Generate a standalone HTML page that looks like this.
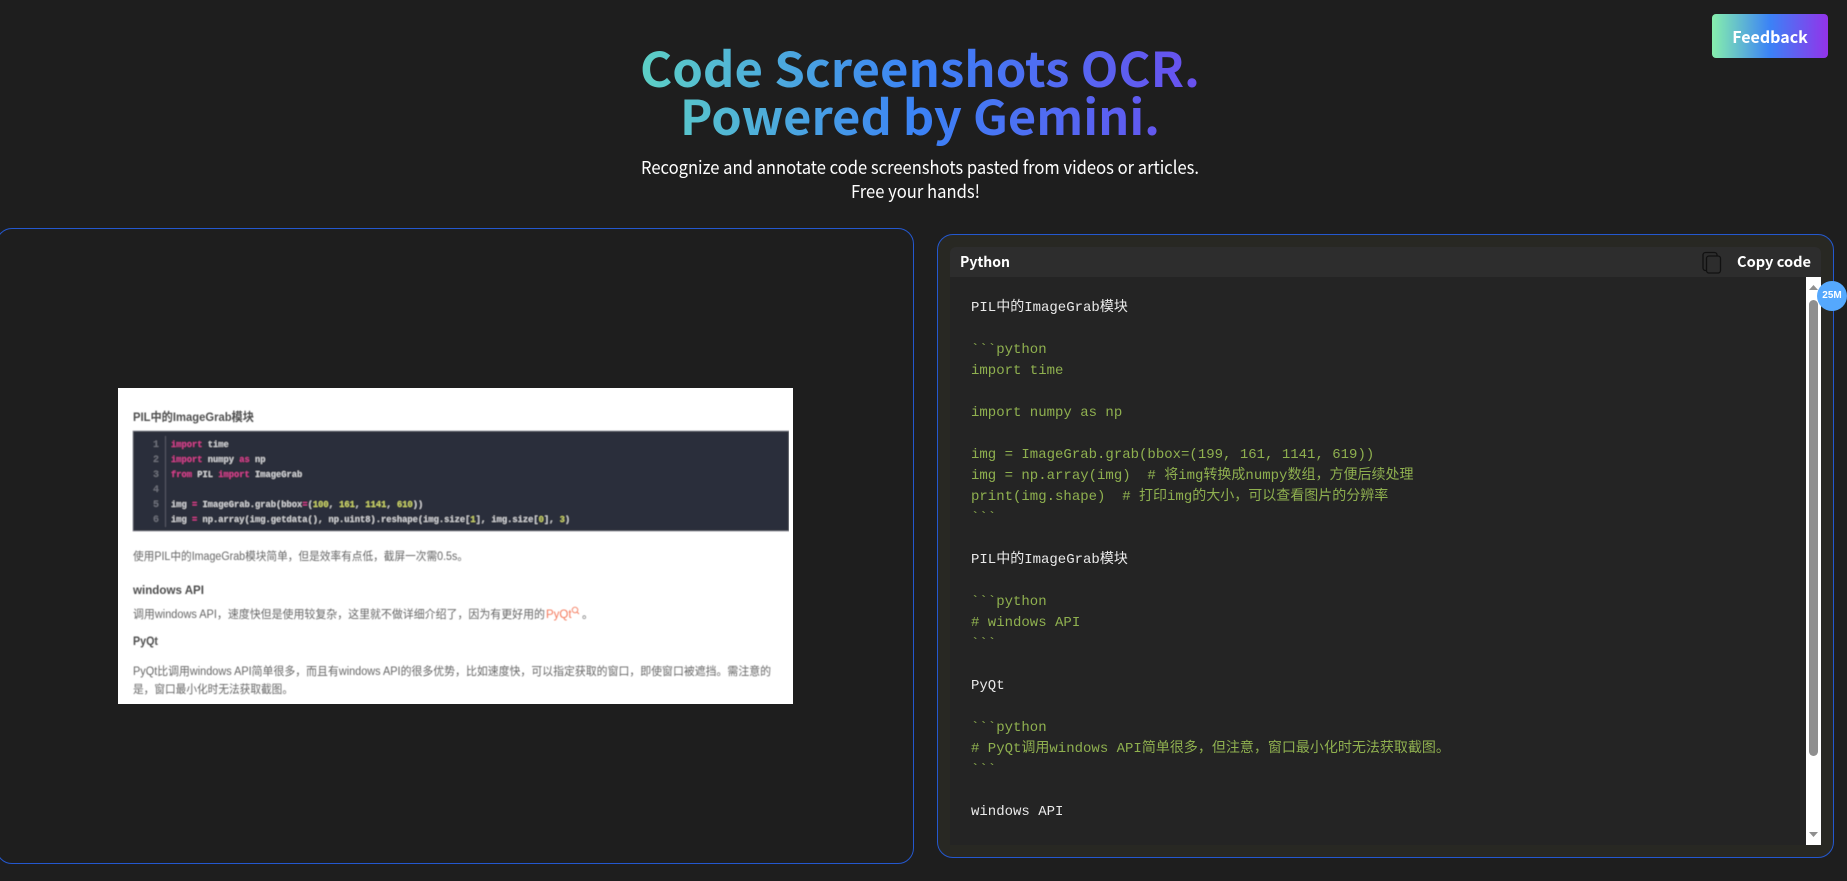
<!DOCTYPE html>
<html lang="en"><head><meta charset="utf-8"><title>Code Screenshots OCR</title>
<style>
html,body{margin:0;padding:0;width:1847px;height:881px;overflow:hidden;background:#1e1e1e}
.abs{position:absolute}
#left{left:-4px;top:228px;width:916px;height:634px;border:1px solid #2458cf;border-radius:16px;box-sizing:content-box}
#right{left:937px;top:234px;width:895px;height:622px;border:1px solid #2458cf;border-radius:16px;background:#282823}
#hdr{left:950px;top:247px;width:871px;height:30px;background:#2d2d2d;border-radius:6px 6px 0 0}
#code{left:950px;top:277px;width:856px;height:568px;background:#242424}
#bar{left:1806px;top:277px;width:15px;height:568px;background:#fff}
#thumb{left:1809px;top:300px;width:9px;height:456px;background:#8f8f8f;border-radius:5px}
#fb{left:1712px;top:14px;width:116px;height:44px;border-radius:4px;background:linear-gradient(90deg,#86efac,#3b82f6 50%,#9333ea);color:#fff;font:700 16px/44px "Noto Sans CJK SC","Liberation Sans",sans-serif;text-align:center}
#badge{left:1817px;top:281px;width:30px;height:30px;border-radius:50%;background:#55a8fd;color:#fff;font:700 10px/30px "Liberation Sans",sans-serif;text-align:center}
pre{margin:0;left:971px;top:298px;font:14px/21px "Liberation Mono","Noto Sans CJK SC",monospace;color:#eaeaea}
pre b{font-weight:400;color:#8fb04f}
svg{position:absolute;left:0;top:0}
</style></head><body>
<div class="abs" id="left"></div>
<div class="abs" id="right"></div>
<div class="abs" id="hdr"></div>
<div class="abs" id="code"></div>
<pre class="abs">PIL中的ImageGrab模块

<b>&#96;&#96;&#96;python
import time

import numpy as np

img = ImageGrab.grab(bbox=(199, 161, 1141, 619))
img = np.array(img)  # 将img转换成numpy数组，方便后续处理
print(img.shape)  # 打印img的大小，可以查看图片的分辨率
&#96;&#96;&#96;</b>

PIL中的ImageGrab模块

<b>&#96;&#96;&#96;python
# windows API
&#96;&#96;&#96;</b>

PyQt

<b>&#96;&#96;&#96;python
# PyQt调用windows API简单很多，但注意，窗口最小化时无法获取截图。
&#96;&#96;&#96;</b>

windows API</pre>
<div class="abs" id="bar"></div>
<div class="abs" id="thumb"></div>
<div class="abs" id="fb">Feedback</div>
<svg width="1847" height="881" viewBox="0 0 1847 881" xmlns="http://www.w3.org/2000/svg">
<defs>
<linearGradient id="g" gradientUnits="userSpaceOnUse" x1="640" y1="0" x2="1200" y2="0">
<stop offset="0" stop-color="#5dd0c5"/><stop offset=".5" stop-color="#3b82f6"/><stop offset="1" stop-color="#6a50ee"/>
</linearGradient>
<filter id="soft" x="0" y="0" width="1" height="1"><feGaussianBlur stdDeviation="0.45"/></filter>
</defs>
<g font-family="'Noto Sans CJK SC','Liberation Sans',sans-serif">
<text x="640" y="87" font-size="48" font-weight="700" fill="url(#g)" textLength="560" lengthAdjust="spacingAndGlyphs">Code Screenshots OCR.</text>
<text x="680" y="135" font-size="48" font-weight="700" fill="url(#g)" textLength="480" lengthAdjust="spacingAndGlyphs">Powered by Gemini.</text>
<text x="641" y="174" font-size="18" fill="#fff" textLength="558" lengthAdjust="spacingAndGlyphs">Recognize and annotate code screenshots pasted from videos or articles.</text>
<text x="851" y="198" font-size="18" fill="#fff" textLength="129" lengthAdjust="spacingAndGlyphs">Free your hands!</text>
<text x="960" y="267" font-size="14.5" font-weight="700" fill="#fff" textLength="50" lengthAdjust="spacingAndGlyphs">Python</text>
<text x="1737" y="267" font-size="14.5" font-weight="700" fill="#fff" textLength="74" lengthAdjust="spacingAndGlyphs">Copy code</text>
</g>
<!-- copy icon -->
<rect x="1703" y="252.5" width="14" height="18" rx="2.5" fill="none" stroke="#111" stroke-width="1.3"/>
<rect x="1706.5" y="256" width="14" height="17" rx="2.5" fill="#2d2d2d" stroke="#111" stroke-width="1.3"/>
<!-- scrollbar arrows -->
<path d="M1813.5 285l4.5 5h-9z" fill="#8f8f8f"/>
<path d="M1813.5 837l4.5-5h-9z" fill="#8f8f8f"/>
<!-- screenshot image -->
<rect x="118" y="388" width="675" height="316" fill="#fff"/>
<g filter="url(#soft)">
<rect x="133" y="431" width="656" height="100" fill="#2b2e3a" stroke="#8a8c94" stroke-width=".7"/>
<rect x="165" y="436" width="1" height="91" fill="#555862"/>
<g font-family="'Liberation Mono',monospace" font-size="8.75" font-weight="700" fill="#d4d5d9" xml:space="preserve">
<g fill="#6d707a" font-size="10" text-anchor="end"><text x="159" y="447">1</text><text x="159" y="462">2</text><text x="159" y="477">3</text><text x="159" y="492">4</text><text x="159" y="507">5</text><text x="159" y="522">6</text></g>
<text x="171" y="447"><tspan fill="#d9418f">import</tspan> time</text>
<text x="171" y="462"><tspan fill="#d9418f">import</tspan> numpy <tspan fill="#d9418f">as</tspan> np</text>
<text x="171" y="477"><tspan fill="#d9418f">from</tspan> PIL <tspan fill="#d9418f">import</tspan> ImageGrab</text>
<text x="171" y="507">img <tspan fill="#d9418f">=</tspan> ImageGrab.grab(bbox<tspan fill="#d9418f">=</tspan>(<tspan fill="#cfd86a">100</tspan>, <tspan fill="#cfd86a">161</tspan>, <tspan fill="#cfd86a">1141</tspan>, <tspan fill="#cfd86a">610</tspan>))</text>
<text x="171" y="522">img <tspan fill="#d9418f">=</tspan> np.array(img.getdata(), np.uint8).reshape(img.size[<tspan fill="#cfd86a">1</tspan>], img.size[<tspan fill="#cfd86a">0</tspan>], <tspan fill="#cfd86a">3</tspan>)</text>
</g>
<g font-family="'Liberation Sans','Noto Sans CJK SC',sans-serif" fill="#666">
<text x="133" y="421" font-size="12" font-weight="700" fill="#4d4d4d" textLength="121" lengthAdjust="spacingAndGlyphs">PIL中的ImageGrab模块</text>
<text x="133" y="560" font-size="11.5" textLength="335" lengthAdjust="spacingAndGlyphs">使用PIL中的ImageGrab模块简单，但是效率有点低，截屏一次需0.5s。</text>
<text x="133" y="594" font-size="12" font-weight="700" fill="#4d4d4d" textLength="71" lengthAdjust="spacingAndGlyphs">windows API</text>
<text x="133" y="618" font-size="11.5" textLength="412" lengthAdjust="spacingAndGlyphs">调用windows API，速度快但是使用较复杂，这里就不做详细介绍了，因为有更好用的</text>
<text x="546" y="618" font-size="11.5" fill="#f4795b">PyQt</text>
<circle cx="575" cy="610" r="2.8" fill="none" stroke="#f4795b" stroke-width=".9"/>
<path d="M577 612l2 2" stroke="#f4795b" stroke-width=".9"/>
<text x="582" y="618" font-size="11.5">。</text>
<text x="133" y="645" font-size="12" font-weight="700" fill="#4d4d4d" textLength="25" lengthAdjust="spacingAndGlyphs">PyQt</text>
<text x="133" y="675" font-size="11.5" textLength="638" lengthAdjust="spacingAndGlyphs">PyQt比调用windows API简单很多，而且有windows API的很多优势，比如速度快，可以指定获取的窗口，即使窗口被遮挡。需注意的</text>
<text x="133" y="693" font-size="11.5" textLength="160" lengthAdjust="spacingAndGlyphs">是，窗口最小化时无法获取截图。</text>
</g>
</g>
</svg>
<div class="abs" id="badge">25M</div>
</body></html>
